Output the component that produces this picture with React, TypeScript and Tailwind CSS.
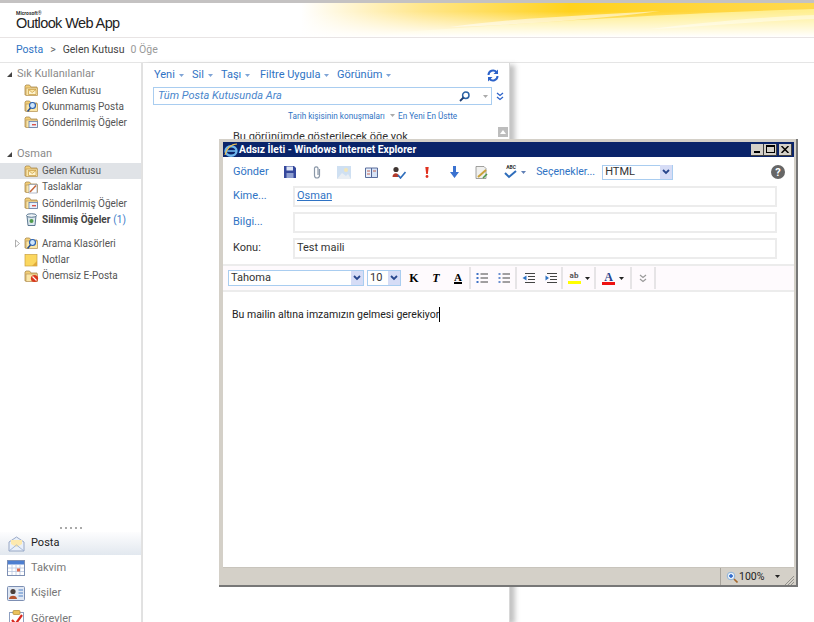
import type { ReactNode } from 'react';

const Folder = ({ badge }: { badge?: ReactNode }) => (
  <svg width="15" height="14" viewBox="0 0 15 14" className="shrink-0">
    <path d="M1 3 V12 H13 V4 H7 L5.5 2 H2 Z" fill="#f3cf78" stroke="#a98b4f" strokeWidth="0.8" />
    <path d="M2 5 H13.5 V12.5 H2 Z" fill="#fbe7a8" stroke="#b9975a" strokeWidth="0.7" />
    {badge}
  </svg>
);

const MailBadge = () => <path d="M4.5 6.5 H12 V11.5 H4.5 Z M4.5 6.5 L8.2 9.5 L12 6.5" fill="#fdf3cf" stroke="#c79a3e" strokeWidth="0.7" />;
const SentBadge = () => (
  <g>
    <rect x="5" y="6.5" width="8.5" height="6" fill="#e9f0fb" stroke="#4f6fa8" strokeWidth="0.7" />
    <rect x="8" y="9" width="4" height="1.4" fill="#d9534a" />
  </g>
);
const SearchBadge = () => (
  <g>
    <circle cx="8.5" cy="6.5" r="3" fill="#cfe6fb" stroke="#2a62b5" strokeWidth="1.2" />
    <path d="M6.5 9 L3.5 12.5" stroke="#2a4f8c" strokeWidth="1.6" />
  </g>
);
const DraftBadge = () => (
  <g>
    <rect x="5" y="4.5" width="8" height="8.5" fill="#fff" stroke="#7f8ea8" strokeWidth="0.6" />
    <path d="M6 12 L12 5.5" stroke="#c5663a" strokeWidth="1.5" />
  </g>
);
const JunkBadge = () => (
  <g>
    <circle cx="10.5" cy="9.5" r="3.6" fill="#d9381e" />
    <path d="M8.5 7.5 L12.5 11.5" stroke="#fff" strokeWidth="1.1" />
  </g>
);

const Trash = () => (
  <svg width="15" height="15" viewBox="0 0 15 15" className="shrink-0">
    <path d="M3 4 H12 L11 13.5 H4 Z" fill="#dbe7ee" stroke="#4d6b86" strokeWidth="0.9" />
    <ellipse cx="7.5" cy="3.5" rx="5" ry="1.8" fill="#eef4f8" stroke="#4d6b86" strokeWidth="0.9" />
    <circle cx="7.5" cy="9" r="2" fill="#4f9a4a" />
  </svg>
);

const Note = () => (
  <svg width="14" height="14" viewBox="0 0 14 14" className="shrink-0">
    <rect x="1" y="1.5" width="12" height="11.5" fill="#fbd75f" stroke="#c9a040" strokeWidth="0.7" />
    <path d="M8 13 L13 8 V13 Z" fill="#e0a93a" />
  </svg>
);

const Tri = ({ open }: { open?: boolean }) =>
  open ? (
    <svg width="7" height="7" viewBox="0 0 7 7" className="shrink-0">
      <path d="M1 6 H6 V1 Z" fill="#444" />
    </svg>
  ) : (
    <svg width="7" height="9" viewBox="0 0 7 9" className="shrink-0">
      <path d="M1.5 1 L5.5 4.5 L1.5 8 Z" fill="#fff" stroke="#999" strokeWidth="0.8" />
    </svg>
  );

const Caret = ({ color = '#7fa4d6' }: { color?: string }) => (
  <svg width="5" height="3" viewBox="0 0 5 3" className="shrink-0">
    <path d="M0 0 H5 L2.5 3 Z" fill={color} />
  </svg>
);

const SelectArrow = () => (
  <span className="flex h-[14px] w-[12px] items-center justify-center bg-[#d6dcf6]">
    <svg width="8" height="6" viewBox="0 0 8 6">
      <path d="M1 1 L4 4 L7 1" fill="none" stroke="#27458c" strokeWidth="1.8" />
    </svg>
  </span>
);

const Row = ({ icon, label, count, bold, active, caret }: { icon: ReactNode; label: string; count?: string; bold?: boolean; active?: boolean; caret?: boolean }) => (
  <div className={`flex h-[16.2px] items-center ${active ? 'bg-[#e0e3e7]' : ''}`}>
    <span className="flex w-[24px] justify-end pr-[3px]">{caret && <Tri />}</span>
    <span className="flex w-[18px]">{icon}</span>
    <span className={`text-[10px] ${bold ? 'font-bold text-[#444]' : 'text-[#555]'}`}>{label}</span>
    {count && <span className="ml-[3px] text-[10px] text-[#3b7cc9]">{count}</span>}
  </div>
);

const Section = ({ title }: { title: string }) => (
  <div className="flex h-[16px] items-center gap-[4px] pl-[6px]">
    <Tri open />
    <span className="text-[11px] text-[#8a8a8a]">{title}</span>
  </div>
);

const NavItem = ({ icon, label, active }: { icon: ReactNode; label: string; active?: boolean }) => (
  <div className={`flex items-center gap-[6px] pl-[7px] ${active ? 'h-[23px] bg-gradient-to-b from-[#fdfdfe] to-[#e2e8ef]' : 'h-[25.5px]'}`}>
    <span className="flex w-[18px] justify-center">{icon}</span>
    <span className={`text-[11px] ${active ? 'text-[#222]' : 'text-[#777]'}`}>{label}</span>
  </div>
);

const MenuItem = ({ label, width }: { label: string; width: string }) => (
  <span className={`flex items-center gap-[4px] text-[11px] text-[#2f73c4] ${width}`}>
    {label}
    <Caret />
  </span>
);

const Cell = ({ children, className = 'w-[27.4px]' }: { children: ReactNode; className?: string }) => (
  <span className={`flex h-[16px] shrink-0 items-center justify-center ${className}`}>{children}</span>
);

const Sep = () => <span className="h-[22px] w-[2px] shrink-0 bg-[#e6e4e6]" />;

const Lines = ({ numbered }: { numbered?: boolean }) => (
  <svg width="12" height="12" viewBox="0 0 12 12">
    {[2, 6, 10].map((y) => (
      <g key={y}>
        <rect x="0.5" y={y - 1} width="2" height="2" fill={numbered ? '#6a8fd0' : '#3f72c6'} />
        <path d={`M4.5 ${y} H12`} stroke="#444" strokeWidth="1" />
      </g>
    ))}
  </svg>
);

const Indent = ({ flip }: { flip?: boolean }) => (
  <svg width="13" height="12" viewBox="0 0 13 12">
    <path d="M3 1.5 H13 M6 4.5 H13 M6 7.5 H13 M3 10.5 H13" stroke="#444" strokeWidth="1.1" />
    <path d={flip ? 'M5 6 L1.5 3.5 V8.5 Z' : 'M0.5 6 L4.5 3.5 V8.5 Z'} fill="#2f73c4" />
  </svg>
);

const Field = ({ label, link, children }: { label: string; link?: boolean; children?: ReactNode }) => (
  <div className="flex h-[21px] items-center">
    <span className={`w-[70px] pl-[10px] text-[11px] ${link ? 'text-[#2f73c4]' : 'text-[#333]'}`}>{label}</span>
    <div className="flex h-[21px] w-[484px] items-center border-2 border-[#ececec] px-[2px] text-[11px] text-[#333]">{children}</div>
  </div>
);

export default function App() {
  return (
    <div className="relative h-[622px] w-[814px] overflow-hidden bg-white font-['Roboto',sans-serif]">
      <div className="h-[3px] bg-[#c4c2c2]" />
      <header className="relative flex h-[34px] items-center overflow-hidden pl-[16px]">
        <svg width="814" height="34" viewBox="0 0 814 34" className="absolute left-0 top-0">
          <defs>
            <linearGradient id="band" x1="0" x2="1" y1="0" y2="0">
              <stop offset="0.37" stopColor="#fff" />
              <stop offset="0.52" stopColor="#ffe68a" />
              <stop offset="0.7" stopColor="#ffd21e" />
              <stop offset="0.88" stopColor="#ffd640" />
              <stop offset="1" stopColor="#ffd94e" />
            </linearGradient>
            <linearGradient id="fade" x1="0" x2="0" y1="0" y2="1">
              <stop offset="0.25" stopColor="#fff" stopOpacity="0" />
              <stop offset="1" stopColor="#fff" stopOpacity="1" />
            </linearGradient>
          </defs>
          <rect width="814" height="34" fill="url(#band)" />
          <path d="M300 34 C430 30 560 14 814 6 V34 Z" fill="#fff6a8" opacity="0.75" />
          <path d="M450 24 C520 14 600 12 660 8 C600 16 520 22 450 24 Z" fill="#fff" opacity="0.55" />
          <path d="M650 26 C700 20 760 14 814 12 V16 C760 18 700 24 650 26 Z" fill="#fff" opacity="0.45" />
          <rect width="814" height="34" fill="url(#fade)" />
        </svg>
        <div className="relative flex flex-col">
          <span className="text-[5px] font-bold leading-[5px] text-[#333]">Microsoft®</span>
          <span className="font-['Liberation_Sans',sans-serif] text-[14.5px] leading-[14px] tracking-[-0.6px] text-[#222]">Outlook Web App</span>
        </div>
      </header>
      <div className="h-[1px] bg-[#e8e4e4]" />
      <div className="flex h-[24px] items-center pl-[16px] text-[10.5px]">
        <span className="text-[#2f73c4]">Posta</span>
        <span className="ml-[7px] mr-[7px] text-[#666]">&gt;</span>
        <span className="text-[#444]">Gelen Kutusu</span>
        <span className="ml-[6px] text-[#999]">0 Öğe</span>
      </div>
      <div className="flex h-[560px] border-t border-[#e5e5e5]">
        <aside className="flex w-[143px] shrink-0 flex-col border-r-2 border-[#e2e2e2] pt-[3px]">
          <Section title="Sık Kullanılanlar" />
          <div>
            <Row icon={<Folder badge={<MailBadge />} />} label="Gelen Kutusu" />
            <Row icon={<Folder badge={<SearchBadge />} />} label="Okunmamış Posta" />
            <Row icon={<Folder badge={<SentBadge />} />} label="Gönderilmiş Öğeler" />
          </div>
          <div className="mt-[16px]">
            <Section title="Osman" />
          </div>
          <div>
            <Row icon={<Folder badge={<MailBadge />} />} label="Gelen Kutusu" active />
            <Row icon={<Folder badge={<DraftBadge />} />} label="Taslaklar" />
            <Row icon={<Folder badge={<SentBadge />} />} label="Gönderilmiş Öğeler" />
            <Row icon={<Trash />} label="Silinmiş Öğeler" count="(1)" bold />
          </div>
          <div className="mt-[8px]">
            <Row icon={<Folder badge={<SearchBadge />} />} label="Arama Klasörleri" caret />
            <Row icon={<Note />} label="Notlar" />
            <Row icon={<Folder badge={<JunkBadge />} />} label="Önemsiz E-Posta" />
          </div>
          <div className="flex-1" />
          <div className="mb-[3px] flex justify-center gap-[3px]">
            {[0, 1, 2, 3, 4].map((d) => (
              <span key={d} className="h-[2px] w-[2px] bg-[#aaa]" />
            ))}
          </div>
          <div className="h-[90px]">
            <NavItem
              active
              label="Posta"
              icon={
                <svg width="17" height="16" viewBox="0 0 17 16">
                  <path d="M1 6 L8.5 1 L16 6 V15 H1 Z" fill="#e9f0fa" stroke="#8e9fc0" strokeWidth="0.9" />
                  <path d="M3 4 H14 V8 L8.5 11 L3 8 Z" fill="#fde9ae" />
                  <path d="M1 15 L8.5 9 L16 15" fill="none" stroke="#9fb2d2" strokeWidth="0.9" />
                </svg>
              }
            />
            <NavItem
              label="Takvim"
              icon={
                <svg width="18" height="16" viewBox="0 0 18 16">
                  <rect x="0.5" y="0.5" width="17" height="15" fill="#fff" stroke="#7d8fb3" />
                  <rect x="1" y="1" width="16" height="3.5" fill="#4d7fd1" />
                  <path d="M1 8 H17 M1 11.5 H17 M5 4.5 V15 M9 4.5 V15 M13 4.5 V15" stroke="#b9c6df" strokeWidth="0.8" />
                  <rect x="10" y="8.5" width="3" height="3" fill="#e0674b" />
                </svg>
              }
            />
            <NavItem
              label="Kişiler"
              icon={
                <svg width="18" height="15" viewBox="0 0 18 15">
                  <rect x="0.5" y="0.5" width="17" height="14" rx="1" fill="#dfe7f3" stroke="#7d8fb3" />
                  <circle cx="6" cy="5.5" r="2.6" fill="#4a3f3a" />
                  <path d="M2 13 C2 8.5 10 8.5 10 13 Z" fill="#b4532f" />
                  <path d="M11.5 4 H16 M11.5 7 H16 M11.5 10 H16" stroke="#7fa4d6" strokeWidth="1.6" />
                </svg>
              }
            />
            <NavItem
              label="Görevler"
              icon={
                <svg width="17" height="17" viewBox="0 0 17 17">
                  <rect x="1.5" y="2.5" width="14" height="14" fill="#fff" stroke="#8e9fc0" />
                  <rect x="5" y="0.5" width="7" height="4" rx="1" fill="#ecc25c" stroke="#b08b30" strokeWidth="0.7" />
                  <path d="M4 10 L7.5 14 L14 5" fill="none" stroke="#d9281e" strokeWidth="2.2" />
                </svg>
              }
            />
          </div>
        </aside>
        <main className="w-[367px] shrink-0 border-r border-[#d8d8d8] pl-[10px] shadow-[5px_2px_5px_rgba(120,120,120,0.45)]">
          <div className="flex h-[24px] items-center pl-[1px] pt-[1px]">
            <MenuItem label="Yeni" width="w-[38px]" />
            <MenuItem label="Sil" width="w-[29px]" />
            <MenuItem label="Taşı" width="w-[39px]" />
            <MenuItem label="Filtre Uygula" width="w-[77px]" />
            <MenuItem label="Görünüm" width="w-[150px]" />
            <svg width="12" height="13" viewBox="0 0 12 13">
              <path d="M1.5 6 A4.5 4.5 0 0 1 9.5 3.2 M10.5 7 A4.5 4.5 0 0 1 2.5 9.8" fill="none" stroke="#2c62c9" strokeWidth="2" />
              <path d="M11 0.5 V5 H6.5 Z M1 12.5 V8 H5.5 Z" fill="#2c62c9" />
            </svg>
          </div>
          <div className="flex items-center">
            <div className="flex h-[18px] w-[339px] items-center border border-[#a9cdf0] pl-[4px]">
              <span className="flex-1 text-[11px] italic text-[#4a86cc]">Tüm Posta Kutusunda Ara</span>
              <svg width="11" height="11" viewBox="0 0 11 11" className="mr-[13px]">
                <circle cx="6.8" cy="4.2" r="3.2" fill="none" stroke="#2a62a5" strokeWidth="1.5" />
                <path d="M4.5 6.5 L1 10" stroke="#1f3f73" strokeWidth="1.8" />
              </svg>
              <span className="mr-[3px]">
                <Caret color="#aaa" />
              </span>
            </div>
            <svg width="8" height="9" viewBox="0 0 8 9" className="ml-[4px]">
              <path d="M1 1 L4 3.5 L7 1 M1 5 L4 7.5 L7 5" fill="none" stroke="#2c62c9" strokeWidth="1.3" />
            </svg>
          </div>
          <div className="flex h-[22px] items-center whitespace-nowrap pl-[135px] text-[8.2px] text-[#2f73c4]">
            <span className="flex w-[110px] items-center gap-[5px]">
              Tarih kişisinin konuşmaları
              <Caret color="#aaa" />
            </span>
            <span>En Yeni En Üstte</span>
          </div>
          <div className="flex items-start">
            <span className="ml-[80px] w-[265px] pt-[2px] text-[11px] text-[#333]">Bu görünümde gösterilecek öğe yok</span>
            <span className="flex h-[10px] w-[10px] items-center justify-center bg-[#bdbdbd]">
              <svg width="6" height="4" viewBox="0 0 6 4">
                <path d="M0 4 L3 0 L6 4 Z" fill="#fff" />
              </svg>
            </span>
          </div>
        </main>
      </div>

      <section className="absolute left-[219px] top-[139px] flex h-[448px] w-[579px] flex-col border-b-2 border-r-2 border-[#777] bg-[#d4d0c8] pl-[4px] pr-[2px] pt-[3px]">
        <div className="flex h-[15px] shrink-0 items-center bg-[#0a246a] pl-[1px] pr-[2px]">
          <svg width="14" height="14" viewBox="0 0 14 14" className="mr-[1px]">
            <ellipse cx="7" cy="8" rx="5.5" ry="4.8" fill="none" stroke="#6fb7ee" strokeWidth="2.4" />
            <path d="M2 8 H12" stroke="#6fb7ee" strokeWidth="1.6" />
            <path d="M1 12 C2 6 7 1 13 1" fill="none" stroke="#f2c24f" strokeWidth="1.2" />
          </svg>
          <span className="flex-1 text-[10.3px] font-bold text-white">Adsız İleti - Windows Internet Explorer</span>
          {['min', 'max', 'close'].map((b) => (
            <span key={b} className={`flex h-[12px] w-[13px] items-center justify-center border-b border-r border-[#404040] bg-[#d4d0c8] ${b === 'close' ? 'ml-[2px]' : ''}`}>
              {b === 'min' && <span className="mt-[6px] h-[2px] w-[6px] bg-black" />}
              {b === 'max' && <span className="h-[8px] w-[9px] border border-t-2 border-black" />}
              {b === 'close' && (
                <svg width="8" height="7" viewBox="0 0 8 7">
                  <path d="M0.5 0 L7.5 7 M7.5 0 L0.5 7" stroke="#000" strokeWidth="1.5" />
                </svg>
              )}
            </span>
          ))}
        </div>

        <div className="flex min-h-0 flex-1 flex-col bg-white">
          <div className="flex h-[29px] shrink-0 items-center pl-[10px] pt-[1px]">
            <span className="w-[43px] text-[11px] text-[#2f73c4]">Gönder</span>
            <Cell>
              <svg width="12" height="12" viewBox="0 0 12 12">
                <path d="M0 0 H10 L12 2 V12 H0 Z" fill="#35489c" />
                <rect x="2.5" y="0.5" width="6.5" height="4" fill="#dfe6f5" />
                <rect x="2.5" y="7" width="7" height="5" fill="#8f9fd0" />
              </svg>
            </Cell>
            <Cell>
              <svg width="8" height="14" viewBox="0 0 8 14">
                <path d="M6.5 4 V10.5 A2.5 2.5 0 0 1 1.5 10.5 V3 A2 2 0 0 1 5 3 V10" fill="none" stroke="#8b98a8" strokeWidth="1.2" />
              </svg>
            </Cell>
            <Cell>
              <svg width="14" height="13" viewBox="0 0 14 13">
                <rect width="14" height="13" fill="#cfe0f2" />
                <path d="M0 13 L5 7 L9 10 L11 8 L14 13 Z" fill="#e9eef3" />
                <circle cx="9" cy="4" r="2" fill="#f2e6b8" />
              </svg>
            </Cell>
            <Cell>
              <svg width="13" height="11" viewBox="0 0 13 11">
                <path d="M0.5 1 H6.5 V10.5 H0.5 Z" fill="#e6eefb" stroke="#4a5f92" strokeWidth="0.9" />
                <path d="M6.5 1 H12.5 V10.5 H6.5 Z" fill="#d6e2f5" stroke="#4a5f92" strokeWidth="0.9" />
                <path d="M2 4 H5 M2 7 H5 M8 4 H11" stroke="#c0563f" strokeWidth="0.9" />
              </svg>
            </Cell>
            <Cell>
              <svg width="14" height="13" viewBox="0 0 14 13">
                <circle cx="4" cy="3.5" r="2.6" fill="#3f3532" />
                <path d="M0.5 11 C0.5 6 7 6 7 11 Z" fill="#b23a2a" />
                <path d="M6 9 L8.5 12 L13.5 6" fill="none" stroke="#2e6dbb" strokeWidth="1.6" />
              </svg>
            </Cell>
            <Cell>
              <svg width="4" height="11" viewBox="0 0 4 11">
                <path d="M0.3 0 H3.7 L2.8 7 H1.2 Z" fill="#e0301e" />
                <circle cx="2" cy="9.5" r="1.4" fill="#e0301e" />
              </svg>
            </Cell>
            <Cell>
              <svg width="9" height="12" viewBox="0 0 9 12">
                <path d="M3 0 H6 V6 H9 L4.5 12 L0 6 H3 Z" fill="#3b72d0" />
              </svg>
            </Cell>
            <Cell>
              <svg width="13" height="13" viewBox="0 0 13 13">
                <path d="M1 0.5 H9 L11 2.5 V12.5 H1 Z" fill="#f0f0ee" stroke="#8a8a88" strokeWidth="0.8" />
                <path d="M3 11 L11 4" stroke="#c9a13a" strokeWidth="2" />
                <path d="M8 12 L12 8" stroke="#4f9a4a" strokeWidth="1.6" />
              </svg>
            </Cell>
            <Cell className="w-[40px]">
              <span className="relative mr-[3px] flex h-[14px] w-[14px] justify-center">
                <span className="text-[5px] font-bold leading-[5px] text-[#333]">ABC</span>
                <svg width="13" height="9" viewBox="0 0 13 9" className="absolute bottom-0 left-0">
                  <path d="M1 3 L5 7 L12 1" fill="none" stroke="#2e6dbb" strokeWidth="2" />
                </svg>
              </span>
              <Caret color="#5f7fb5" />
            </Cell>
            <span className="ml-[1px] w-[66px] text-[10.5px] text-[#2f73c4]">Seçenekler...</span>
            <div className="flex h-[15px] w-[71px] items-center justify-between border border-[#a9cdf0] pl-[2px] text-[11px] text-[#333]">
              HTML
              <SelectArrow />
            </div>
            <span className="ml-auto mr-[9px] flex h-[14px] w-[14px] items-center justify-center rounded-full bg-[#666] text-[11px] font-bold leading-none text-white">?</span>
          </div>

          <div className="flex shrink-0 flex-col gap-[5px]">
            <Field label="Kime..." link>
              <span className="text-[#2f73c4] underline">Osman</span>
            </Field>
            <Field label="Bilgi..." link />
            <Field label="Konu:">Test maili</Field>
          </div>

          <div className="mt-[5px] flex h-[28px] shrink-0 items-center border-y-2 border-[#ececec] bg-[#fefafd] pl-[5px]">
            <div className="flex h-[16px] w-[136px] items-center justify-between border border-[#a9cdf0] bg-white pl-[2px] text-[11px] text-[#333]">
              Tahoma
              <SelectArrow />
            </div>
            <div className="ml-[3px] mr-[2px] flex h-[16px] w-[34px] items-center justify-between border border-[#a9cdf0] bg-white pl-[2px] text-[11px] text-[#333]">
              10
              <SelectArrow />
            </div>
            <Cell className="w-[22px]">
              <span className="font-['Liberation_Serif',serif] text-[12px] font-bold text-black">K</span>
            </Cell>
            <Cell className="w-[22px]">
              <span className="font-['Liberation_Serif',serif] text-[12px] font-bold italic text-black">T</span>
            </Cell>
            <Cell className="w-[22px]">
              <span className="border-b-2 border-black font-['Liberation_Serif',serif] text-[11px] font-bold leading-[10px] text-black">A</span>
            </Cell>
            <Sep />
            <Cell className="w-[22px]">
              <Lines />
            </Cell>
            <Cell className="w-[22px]">
              <Lines numbered />
            </Cell>
            <Sep />
            <Cell className="w-[22px]">
              <Indent />
            </Cell>
            <Cell className="w-[22px]">
              <Indent flip />
            </Cell>
            <Sep />
            <Cell className="w-[31px]">
              <span className="mr-[4px] flex flex-col items-center">
                <span className="text-[8px] font-bold leading-[8px] text-[#555]">ab</span>
                <span className="mt-[1px] h-[3px] w-[13px] bg-[#ffff00]" />
              </span>
              <Caret color="#222" />
            </Cell>
            <Sep />
            <Cell className="w-[34px]">
              <span className="mr-[4px] flex flex-col items-center">
                <span className="font-['Liberation_Serif',serif] text-[12px] font-bold leading-[10px] text-[#27458c]">A</span>
                <span className="h-[3px] w-[13px] bg-[#ee1111]" />
              </span>
              <Caret color="#222" />
            </Cell>
            <Sep />
            <Cell className="w-[22px]">
              <svg width="8" height="9" viewBox="0 0 8 9">
                <path d="M1 1 L4 3.5 L7 1 M1 5 L4 7.5 L7 5" fill="none" stroke="#999" strokeWidth="1.2" />
              </svg>
            </Cell>
            <Sep />
          </div>

          <div className="flex-1 pl-[9px] pt-[15px]">
            <span className="block w-fit border-r border-black text-[10.5px] leading-[15px] text-[#222]">Bu mailin altına imzamızın gelmesi gerekiyor</span>
          </div>

          <div className="flex h-[18px] shrink-0 justify-end border-t border-[#c8c4bc] bg-[#d4d0c8]">
            <div className="flex w-[74px] items-center border-l border-[#a8a49c] pl-[5px] text-[10.5px] text-[#222]">
              <svg width="12" height="12" viewBox="0 0 12 12" className="mr-[1px]">
                <circle cx="5" cy="5" r="3.8" fill="#e8f2fb" stroke="#8fb2d6" />
                <path d="M5 3 V7 M3 5 H7" stroke="#2462c9" strokeWidth="1.4" />
                <path d="M8 8 L11.5 11.5" stroke="#a5672c" strokeWidth="1.6" />
              </svg>
              100%
              <span className="ml-[11px]">
                <Caret color="#222" />
              </span>
              <svg width="10" height="10" viewBox="0 0 10 10" className="ml-auto self-end">
                <path d="M10 1 L1 10 M10 4 L4 10 M10 7 L7 10" stroke="#8a8a84" strokeWidth="0.9" />
              </svg>
            </div>
          </div>
        </div>
      </section>
    </div>
  );
}
